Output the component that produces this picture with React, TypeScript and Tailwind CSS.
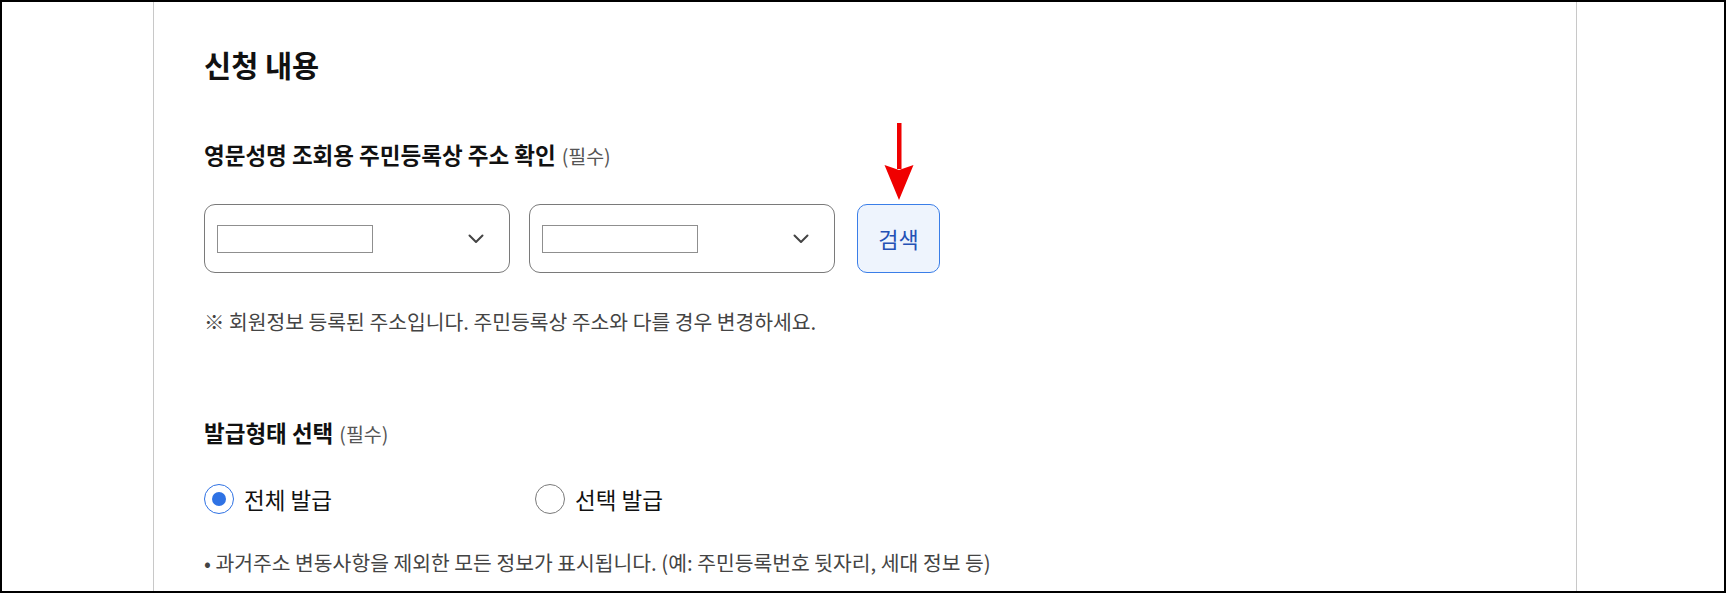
import { useState } from 'react'

const font = { fontFamily: '"Noto Sans CJK KR", "Noto Sans", sans-serif' }

function Chevron() {
  return (
    <svg width="16" height="10" viewBox="0 0 16 10" fill="none" className="shrink-0">
      <path d="M1.5 1.5 L8 8 L14.5 1.5" stroke="#444" strokeWidth="2" strokeLinecap="round" strokeLinejoin="round" />
    </svg>
  )
}

function AddressSelect() {
  return (
    <div className="flex items-center justify-between w-[306px] h-[69px] pl-[12px] pr-[25px] bg-white border border-[#7a7a7a] rounded-[11px]">
      <div className="w-[156px] h-[28px] border border-[#8f8f8f] bg-white" />
      <Chevron />
    </div>
  )
}

function RedArrow() {
  return (
    <svg
      width="30"
      height="78"
      viewBox="0 0 30 78"
      className="absolute left-1/2 -translate-x-1/2 bottom-[calc(100%+3px)]"
    >
      <rect x="13" y="0" width="4.5" height="46" fill="#f00000" />
      <polygon points="0.5,42 15,47 29.5,42 15,77" fill="#f00000" />
    </svg>
  )
}

function Radio({ checked, label, onClick }: { checked: boolean; label: string; onClick: () => void }) {
  return (
    <button onClick={onClick} className="flex items-center gap-[10px] w-[331px] h-[30px] text-left">
      <span
        className={`flex items-center justify-center w-[30px] h-[30px] rounded-full bg-white ${
          checked ? 'border-[1.5px] border-[#2f72e4]' : 'border border-[#7a7a7a]'
        }`}
      >
        {checked && <span className="w-[14px] h-[14px] rounded-full bg-[#2f72e4]" />}
      </span>
      <span className="text-[22.5px] leading-[30px] text-[#111]">{label}</span>
    </button>
  )
}

export default function App() {
  const [issueType, setIssueType] = useState<'all' | 'select'>('all')

  return (
    <div style={font} className="w-[1726px] h-[593px] border-2 border-black bg-white overflow-hidden flex">
      <div className="w-[151px] shrink-0" />
      <div className="w-[1424px] shrink-0 h-full border-l border-r border-[#c8c8c8] pl-[50px] pt-[44px]">
        <h1 className="text-[29.5px] leading-[36px] font-bold text-[#111]">신청 내용</h1>

        <div className="mt-[57px] flex items-baseline gap-[6px]">
          <h2 className="text-[22.5px] leading-[30px] font-bold text-[#111]">영문성명 조회용 주민등록상 주소 확인</h2>
          <span className="text-[19.5px] leading-[30px] text-[#555]">(필수)</span>
        </div>

        <div className="mt-[33px] flex items-center">
          <AddressSelect />
          <div className="ml-[19px]">
            <AddressSelect />
          </div>
          <div className="relative ml-[22px]">
            <RedArrow />
            <button className="w-[83px] h-[69px] rounded-[10px] border border-[#3a7ee8] bg-[#eef4fd] text-[22px] text-[#2451b5]">
              검색
            </button>
          </div>
        </div>

        <p className="mt-[34px] text-[20.4px] leading-[28px] text-[#444]">
          ※ 회원정보 등록된 주소입니다. 주민등록상 주소와 다를 경우 변경하세요.
        </p>

        <div className="mt-[82px] flex items-baseline gap-[6px]">
          <h2 className="text-[22.5px] leading-[30px] font-bold text-[#111]">발급형태 선택</h2>
          <span className="text-[19.5px] leading-[30px] text-[#555]">(필수)</span>
        </div>

        <div className="mt-[35px] flex items-center">
          <Radio checked={issueType === 'all'} label="전체 발급" onClick={() => setIssueType('all')} />
          <Radio checked={issueType === 'select'} label="선택 발급" onClick={() => setIssueType('select')} />
        </div>

        <p className="mt-[34px] text-[20.4px] leading-[28px] text-[#444]">
          • 과거주소 변동사항을 제외한 모든 정보가 표시됩니다. (예: 주민등록번호 뒷자리, 세대 정보 등)
        </p>
      </div>
    </div>
  )
}
